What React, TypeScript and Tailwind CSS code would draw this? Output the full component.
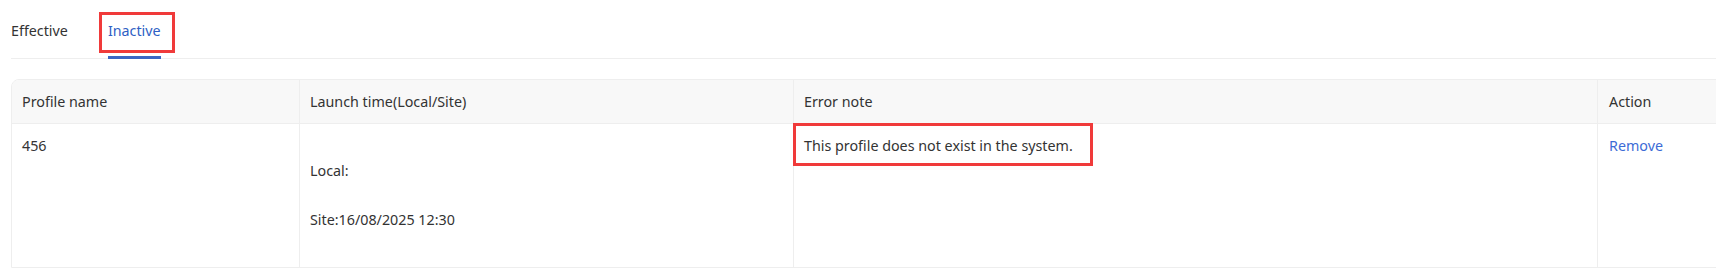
export default function App() {
  return (
    <div className="h-[270px] w-[1716px] overflow-hidden bg-white font-['Noto_Sans',sans-serif] text-[14.3px] text-[#333]">
      {/* tabs */}
      <div className="ml-[11px] flex h-[59px] w-[1760px] items-start gap-[40px] border-b border-[#eee]">
        <div className="relative flex h-[58px] items-center pt-[4px]">
          <span className="leading-none">Effective</span>
        </div>
        <div className="relative flex h-[58px] items-center pt-[4px] text-[#2f5fc4]">
          <span className="leading-none">Inactive</span>
          <div className="absolute -bottom-px left-0 h-[3px] w-full bg-[#3a66c4]" />
          <div className="absolute top-[12px] -left-[9px] -right-[14px] h-[41px] border-[3px] border-[#f03a3a]" />
        </div>
      </div>

      {/* table */}
      <div className="ml-[11px] mt-[20px] w-[1760px] overflow-hidden rounded-t-[8px] border border-[#eee]">
        <div className="flex h-[44px] border-b border-[#eee] bg-[#f8f8f8]">
          <div className="flex w-[288px] items-center border-r border-[#eee] pl-[10px]">Profile name</div>
          <div className="flex w-[494px] items-center border-r border-[#eee] pl-[10px]">Launch time(Local/Site)</div>
          <div className="flex w-[804px] items-center border-r border-[#eee] pl-[10px]">Error note</div>
          <div className="flex flex-1 items-center pl-[11px]">Action</div>
        </div>
        <div className="flex h-[143px] leading-[24.5px]">
          <div className="w-[288px] border-r border-[#eee] pl-[10px] pt-[10px]">456</div>
          <div className="w-[494px] border-r border-[#eee] pl-[10px] pt-[10px]">
            <div className="h-[24.5px]" />
            <div>Local:</div>
            <div className="h-[24.5px]" />
            <div>Site:16/08/2025 12:30</div>
          </div>
          <div className="relative w-[804px] border-r border-[#eee] pl-[10px] pt-[10px]">
            <span>This profile does not exist in the system.</span>
            <div className="absolute -top-[1px] -left-[1px] h-[43px] w-[300px] border-[3px] border-[#f03a3a]" />
          </div>
          <div className="flex-1 pl-[11px] pt-[10px]">
            <span className="text-[#3d6bd6]">Remove</span>
          </div>
        </div>
      </div>
    </div>
  );
}
